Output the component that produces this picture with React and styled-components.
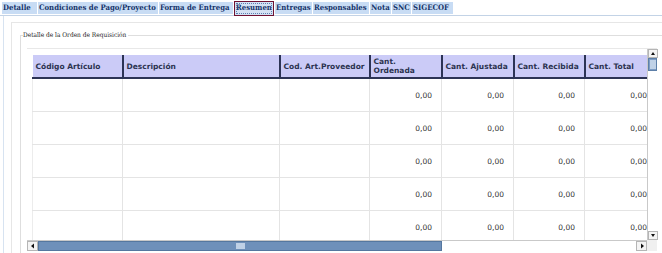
import React from 'react'
import styled, { createGlobalStyle } from 'styled-components'

const Global = createGlobalStyle`
  html, body {
    margin: 0;
    padding: 0;
    background: #fff;
    width: 662px;
    height: 253px;
    overflow: hidden;
  }
`;

const Page = styled.div`
  width: 662px;
  height: 253px;
  display: flex;
  flex-direction: column;
  overflow: hidden;
`;

const TabBar = styled.div`
  display: flex;
  gap: 1px;
  padding: 2px 0 0 2px;
  height: 13px;
  border-bottom: 1px solid #c3d3e6;
`;

const Tab = styled.div`
  box-sizing: border-box;
  width: ${(p) => p.w}px;
  height: ${(p) => (p.active ? 15 : 12)}px;
  margin-top: ${(p) => (p.active ? -1 : 0)}px;
  background: ${(p) => (p.active ? '#d4e2f4' : '#c8dcf4')};
  border: ${(p) => (p.active ? '1px solid #6e1232' : 'none')};
  outline: ${(p) => (p.active ? '1px dotted #5d7fb0' : 'none')};
  outline-offset: -3px;
  color: #17356b;
  font-family: "DejaVu Serif", serif;
  font-stretch: condensed;
  font-weight: bold;
  font-size: 7.7px;
  line-height: ${(p) => (p.active ? 11 : 12)}px;
  white-space: nowrap;
  overflow: hidden;
  padding-left: 1px;
`;

const Outer = styled.div`
  flex: 1;
  margin-left: 3px;
  border-left: 1px solid #d7e3f1;
  padding: 6px 0 0 7px;
  display: flex;
  min-width: 0;
`;

const Inner = styled.div`
  flex: 1;
  border-top: 1px solid #e6e6e6;
  border-left: 1px solid #e6e6e6;
  padding: 8px 0 0 8px;
  display: flex;
  min-width: 0;
`;

const Fieldset = styled.fieldset`
  flex: 1;
  margin: 0;
  padding: 9px 5px 0 2px;
  border: none;
  border-top: 1px solid #dedede;
  border-left: 1px solid #dedede;
  display: flex;
  min-width: 0;
`;

const Legend = styled.legend`
  padding: 0 2px 0 0;
  margin-left: 0;
  font-family: "DejaVu Serif", serif;
  font-stretch: condensed;
  font-size: 6.5px;
  color: #222;
`;

const Viewport = styled.div`
  flex: 1;
  margin-left: 4px;
  display: grid;
  grid-template-columns: minmax(0, 1fr) 10px;
  grid-template-rows: 191px 11px;
  border-top: 1px solid #e8e8e8;
  min-width: 0;
`;

const ScrollArea = styled.div`
  overflow: hidden;
  padding: 6px 0 0 5px;
`;

const Table = styled.table`
  border-collapse: collapse;
  table-layout: fixed;
  width: 696px;
  font-family: "DejaVu Sans", sans-serif;
  font-size: 7.5px;
`;

const Th = styled.th`
  box-sizing: border-box;
  width: ${(p) => p.w}px;
  height: 23px;
  background: #cbcbf7;
  color: #2b3350;
  font-weight: bold;
  text-align: left;
  vertical-align: middle;
  padding: 0 3px;
  line-height: 9px;
  border-left: 2px solid #2c3355;
  border-bottom: 2px solid #2c3355;
  white-space: nowrap;
  &:first-child {
    border-left: none;
  }
`;

const Td = styled.td`
  height: 32px;
  border: 1px solid #e4e4e4;
  border-top: none;
  text-align: right;
  padding: 0 9px 0 0;
  color: #333;
  font-size: 7.5px;
  vertical-align: middle;
  &:first-child {
    border-left: 1px solid #ececec;
  }
`;

const VScroll = styled.div`
  display: flex;
  flex-direction: column;
  border-left: 1px solid #c9c9c9;
  background: #fff;
`;

const Arrow = styled.div`
  box-sizing: border-box;
  width: ${(p) => (p.h ? 11 : 10)}px;
  height: ${(p) => (p.h ? 10 : 9)}px;
  background: #f4f4f4;
  border: 1px solid #b5b5b5;
  display: flex;
  align-items: center;
  justify-content: center;
  flex-shrink: 0;
  svg {
    display: block;
  }
`;

const VThumb = styled.div`
  height: 13px;
  background: #7c9cc4;
  border: 1px solid #5d7fa8;
  box-sizing: border-box;
  display: flex;
  align-items: center;
  justify-content: center;
`;

const Track = styled.div`
  flex: 1;
`;

const HScroll = styled.div`
  display: flex;
  align-items: stretch;
  background: #fff;
  border-top: 1px solid #c9c9c9;
`;

const HThumb = styled.div`
  width: 404px;
  background: #6e90ba;
  border: 1px solid #55779f;
  box-sizing: border-box;
  display: flex;
  align-items: center;
  justify-content: center;
`;

const Grip = styled.div`
  width: ${(p) => p.w}px;
  height: ${(p) => p.h}px;
  background-image: radial-gradient(#c5d6ea 0.7px, transparent 0.8px);
  background-size: 2px 2px;
`;

const Corner = styled.div`
  background: #f0f0f0;
`;

const tabs = [
  ['Detalle', 35],
  ['Condiciones de Pago/Proyecto', 120],
  ['Forma de Entrega', 74],
  ['Resumen', 40],
  ['Entregas', 37],
  ['Responsables', 56],
  ['Nota', 21],
  ['SNC', 19],
  ['SIGECOF', 41],
];

const columns = [
  ['Código Artículo', 90, false],
  ['Descripción', 157, false],
  ['Cod. Art.Proveedor', 90, false],
  ['Cant.\nOrdenada', 72, true],
  ['Cant. Ajustada', 72, true],
  ['Cant. Recibida', 71, true],
  ['Cant. Total', 72, true],
  ['', 72, false],
];

const rows = [1, 2, 3, 4, 5];

const Tri = ({ dir }) => {
  const pts = {
    up: '1,4 5,4 3,1',
    down: '1,1 5,1 3,4',
    left: '4,0.5 4,5.5 1,3',
    right: '2,0.5 2,5.5 5,3',
  }[dir];
  return (
    <svg width="6" height="6" viewBox="0 0 6 6">
      <polygon points={pts} fill="#111" />
    </svg>
  );
};

export default function App() {
  return (
    <Page>
      <Global />
      <TabBar>
        {tabs.map(([label, w]) => (
          <Tab key={label} w={w} active={label === 'Resumen'}>
            {label}
          </Tab>
        ))}
      </TabBar>
      <Outer>
        <Inner>
          <Fieldset>
            <Legend>Detalle de la Orden de Requisición</Legend>
            <Viewport>
              <ScrollArea>
                <Table>
                  <thead>
                    <tr>
                      {columns.map(([label, w], i) => (
                        <Th key={i} w={w}>
                          {label.split('\n').map((l, j) => (
                            <div key={j}>{l}</div>
                          ))}
                        </Th>
                      ))}
                    </tr>
                  </thead>
                  <tbody>
                    {rows.map((r) => (
                      <tr key={r}>
                        {columns.map(([, , num], i) => (
                          <Td key={i}>{num ? '0,00' : ''}</Td>
                        ))}
                      </tr>
                    ))}
                  </tbody>
                </Table>
              </ScrollArea>
              <VScroll>
                <Arrow><Tri dir="up" /></Arrow>
                <VThumb><Grip w={6} h={9} /></VThumb>
                <Track />
                <Arrow><Tri dir="down" /></Arrow>
              </VScroll>
              <HScroll>
                <Arrow h><Tri dir="left" /></Arrow>
                <HThumb><Grip w={9} h={6} /></HThumb>
                <Track />
                <Arrow h><Tri dir="right" /></Arrow>
              </HScroll>
              <Corner />
            </Viewport>
          </Fieldset>
        </Inner>
      </Outer>
    </Page>
  );
}
